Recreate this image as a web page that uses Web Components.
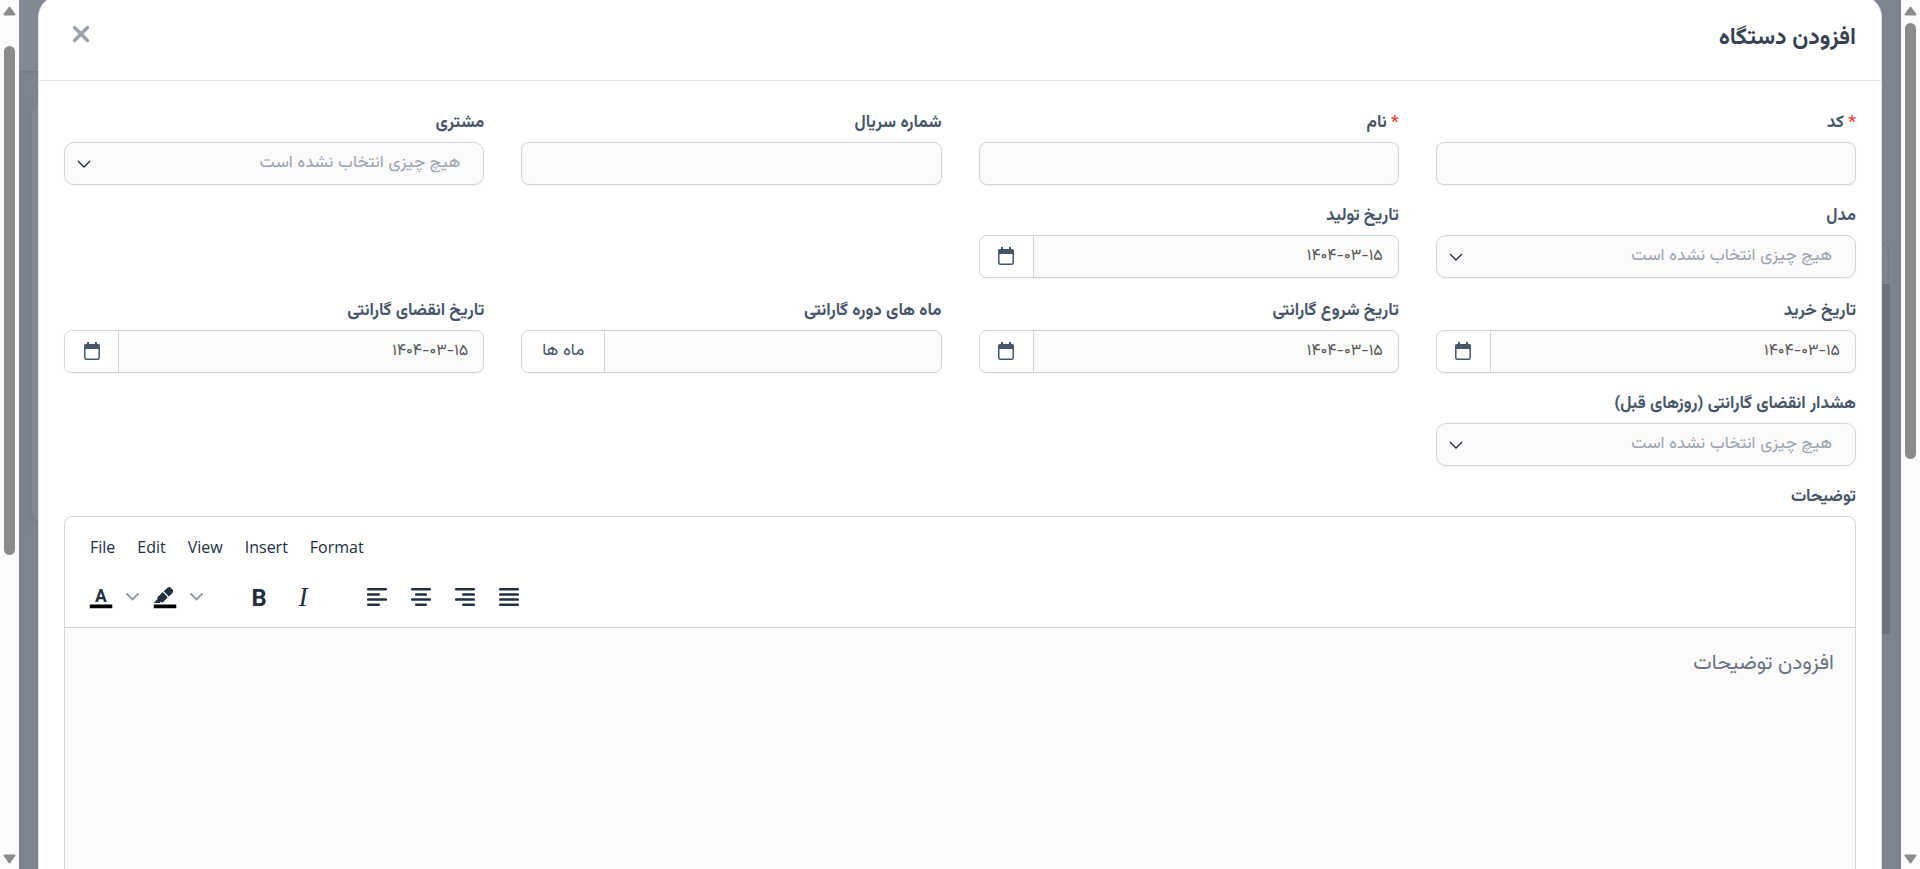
<!DOCTYPE html>
<html lang="fa" dir="rtl">
<head>
<meta charset="utf-8">
<title>افزودن دستگاه</title>
<style>
  html, body {
    margin: 0;
    height: 100%;
    overflow: hidden;
  }
  body {
    font-family: "IRANYekan", "Vazirmatn", "Noto Sans Arabic", "DejaVu Sans", sans-serif;
    font-size: 16px;
    color: #475569;
    background: #7d848e;
  }
</style>
</head>
<body>

<app-shell>
  <device-modal heading="افزودن دستگاه">
    <form-section>
      <form-field label="کد" required></form-field>
      <form-field label="نام" required></form-field>
      <form-field label="شماره سریال"></form-field>
      <form-field label="مشتری" type="select"></form-field>
      <form-field label="مدل" type="select"></form-field>
      <form-field label="تاریخ تولید" type="date" value="۱۴۰۴-۰۳-۱۵"></form-field>
    </form-section>
    <form-section>
      <form-field label="تاریخ خرید" type="date" value="۱۴۰۴-۰۳-۱۵"></form-field>
      <form-field label="تاریخ شروع گارانتی" type="date" value="۱۴۰۴-۰۳-۱۵"></form-field>
      <form-field label="ماه های دوره گارانتی" type="unit" unit="ماه ها"></form-field>
      <form-field label="تاریخ انقضای گارانتی" type="date" value="۱۴۰۴-۰۳-۱۵"></form-field>
      <form-field label="هشدار انقضای گارانتی (روزهای قبل)" type="select"></form-field>
    </form-section>
    <text-editor label="توضیحات" placeholder="افزودن توضیحات"></text-editor>
  </device-modal>
</app-shell>

<script>
class ScrollTrack extends HTMLElement {
  constructor() {
    super();
    this.attachShadow({ mode: 'open' });
    this.shadowRoot.innerHTML = `
      <style>
        :host {
          display: flex;
          flex-direction: column;
          align-items: center;
          width: 19px;
          flex: none;
          padding: 6px 0 5px;
          box-sizing: border-box;
          background: #fcfcfc;
        }
        svg { display: block; flex: none; }
        .track { flex: 1; display: flex; flex-direction: column; }
        .before { flex: var(--before); }
        .thumb { flex: var(--thumb); width: 11px; border-radius: 6px; background: #8b8b8b; }
        .after { flex: var(--after); }
      </style>
      <svg width="13" height="10"><path d="M6.500 1.500L11.500 8.500H1.500Z" fill="#8b8b8b" stroke="#8b8b8b" stroke-width="2" stroke-linejoin="round"/></svg>
      <div class="track"><div class="before"></div><div class="thumb"></div><div class="after"></div></div>
      <svg width="13" height="10"><path d="M6.500 8.500L11.500 1.500H1.500Z" fill="#8b8b8b" stroke="#8b8b8b" stroke-width="2" stroke-linejoin="round"/></svg>
    `;
  }
}
customElements.define('scroll-track', ScrollTrack);

class AppShell extends HTMLElement {
  constructor() {
    super();
    this.attachShadow({ mode: 'open' });
    this.shadowRoot.innerHTML = `
      <style>
        :host { display: flex; height: 100vh; direction: ltr; }
        .page-bar { --before: 30; --thumb: 508; --after: 299; }
        .modal-bar { --before: 7; --thumb: 435; --after: 395; }
        .backdrop {
          flex: 1;
          min-width: 0;
          position: relative;
          overflow: hidden;
          padding: 0 19px;
          background: #7d848e;
        }
        /* what shows of the dimmed page round the modal */
        .topbar { position: absolute; inset: 0 auto auto 0; width: 60px; height: 71px; background: #828992; box-shadow: 0 1px 2px #6f7680; }
        .card { position: absolute; left: 13px; top: 105px; width: 60px; height: 416px; border-radius: 8px; background: #828992; box-shadow: 0 2px 6px #717882; }
        .pill { position: absolute; right: 12px; top: 243px; width: 60px; height: 40px; border-radius: 8px; border: 1px solid #737a84; box-sizing: border-box; }
        .strip { position: absolute; right: 11px; top: 284px; width: 60px; height: 350px; background: #6b727b; }
        ::slotted(*) { position: relative; }
      </style>
      <scroll-track class="page-bar"></scroll-track>
      <div class="backdrop">
        <div class="topbar"></div>
        <div class="card"></div>
        <div class="pill"></div>
        <div class="strip"></div>
        <slot></slot>
      </div>
      <scroll-track class="modal-bar"></scroll-track>
    `;
  }
}
customElements.define('app-shell', AppShell);

class DeviceModal extends HTMLElement {
  constructor() {
    super();
    this.attachShadow({ mode: 'open' });
    this.shadowRoot.innerHTML = `
      <style>
        :host {
          display: flex;
          flex-direction: column;
          direction: rtl;
          box-sizing: border-box;
          min-height: 100%;
          margin-top: -5px;
          background: #fff;
          border: 1px solid #dcdfe5;
          border-radius: 22px;
        }
        header {
          display: flex;
          justify-content: space-between;
          align-items: center;
          padding: 0 25px 0 29px;
          height: 85px;
          border-bottom: 1px solid #e2e4e8;
          box-sizing: border-box;
        }
        h1 { margin: 0; font-size: 23px; line-height: 32px; font-weight: bold; color: #374151; }
        button { border: 0; background: none; padding: 4px; margin-bottom: 8px; color: #9ca3af; }
        svg { display: block; }
        .body { padding: 29px 25px 0; display: flex; flex-direction: column; gap: 20px; }
        ::slotted(text-editor) { margin-top: -2px; }
      </style>
      <header>
        <h1>${this.getAttribute('heading')}</h1>
        <button type="button" aria-label="بستن">
          <svg width="18" height="18" viewBox="0 0 18 18"><path d="M2.500 2.500l13 13M15.500 2.500l-13 13" stroke="currentColor" stroke-width="3.500" stroke-linecap="round"/></svg>
        </button>
      </header>
      <div class="body"><slot></slot></div>
    `;
  }
}
customElements.define('device-modal', DeviceModal);

class FormSection extends HTMLElement {
  constructor() {
    super();
    this.attachShadow({ mode: 'open' });
    this.shadowRoot.innerHTML = `
      <style>
        :host { display: grid; grid-template-columns: repeat(4, minmax(0, 1fr)); gap: 18px 37px; }
      </style>
      <slot></slot>
    `;
  }
}
customElements.define('form-section', FormSection);

const calendarIcon = `
  <svg width="16" height="18" viewBox="0 0 16 18" fill="none">
    <rect x=".8" y="3" width="14.400" height="14.200" rx="1.500" stroke="#475569" stroke-width="1.500"/>
    <path d="M0 7V4a2 2 0 0 1 2-2h12a2 2 0 0 1 2 2v3zM3 0h2v3H3zM11 0h2v3h-2z" fill="#475569"/>
  </svg>`;

class FormField extends HTMLElement {
  constructor() {
    super();
    this.attachShadow({ mode: 'open' });
    const type = this.getAttribute('type') || 'text';
    const value = this.getAttribute('value') || '';

    let control = `<input id="control" type="text" value="${value}">`;
    if (type === 'select') {
      control = `
        <select id="control"><option>هیچ چیزی انتخاب نشده است</option></select>
        <svg class="chevron" width="14" height="8" viewBox="0 0 14 8"><path d="M1 1l6 6 6-6" fill="none" stroke="#1f2937" stroke-width="1.300"/></svg>`;
    }
    if (type === 'date') {
      control += `<button class="addon" type="button" aria-label="تقویم">${calendarIcon}</button>`;
    }
    if (type === 'unit') {
      control += `<span class="addon wide">${this.getAttribute('unit')}</span>`;
    }

    this.shadowRoot.innerHTML = `
      <style>
        :host { display: block; direction: rtl; }
        label { display: block; margin-bottom: 6px; font-size: 17px; line-height: 26px; font-weight: bold; color: #475569; }
        .star { color: #ef4444; }
        .control {
          display: flex;
          align-items: center;
          position: relative;
          height: 43px;
          box-sizing: border-box;
          border: 1px solid #d1d5db;
          border-radius: 8px;
          background: #fbfbfb;
          box-shadow: 0 1px 2px rgba(0, 0, 0, .06);
          overflow: hidden;
        }
        .control.select { border-radius: 10px; }
        input, select {
          flex: 1;
          min-width: 0;
          height: 100%;
          box-sizing: border-box;
          border: 0;
          outline: 0;
          margin: 0;
          padding: 0 15px;
          background: transparent;
          font-family: inherit;
          font-size: 16px;
          color: #555;
        }
        select { appearance: none; padding: 0 23px 2px; font-size: 17px; color: #9ca3af; }
        .chevron { position: absolute; left: 12px; top: 17px; pointer-events: none; }
        .addon {
          display: flex;
          align-items: center;
          justify-content: center;
          flex: none;
          height: 100%;
          width: 54px;
          box-sizing: border-box;
          border: 0;
          border-right: 1px solid #d1d5db;
          padding: 0 0 2px;
          background: #fff;
          color: #475569;
        }
        .wide { width: 83px; font-size: 17px; }
      </style>
      <label for="control">${this.hasAttribute('required') ? '<span class="star">*</span> ' : ''}${this.getAttribute('label')}</label>
      <div class="control ${type}">${control}</div>
    `;
  }
}
customElements.define('form-field', FormField);

// [x, width] for each of the four lines
const alignIcon = bars => `
  <svg width="20" height="18" viewBox="0 0 20 18" fill="currentColor">
    ${bars.map(([x, w], i) => `<rect x="${x}" y="${i * 5.17}" width="${w}" height="2.500" rx="1.200"/>`).join('')}
  </svg>`;

const smallChevron = `<svg width="13" height="8" viewBox="0 0 13 8"><path d="M1 1l5.500 5.500L12 1" fill="none" stroke="#222f3e" stroke-opacity=".5" stroke-width="1.800" stroke-linecap="round"/></svg>`;

class TextEditor extends HTMLElement {
  constructor() {
    super();
    this.attachShadow({ mode: 'open' });
    const menus = ['File', 'Edit', 'View', 'Insert', 'Format'];

    this.shadowRoot.innerHTML = `
      <style>
        :host { display: block; }
        label { display: block; margin-bottom: 6px; font-size: 17px; line-height: 26px; font-weight: bold; color: #475569; }
        .editor { direction: ltr; border: 1px solid #d1d5db; border-radius: 8px; overflow: hidden; }
        .menubar, .toolbar, .group { display: flex; gap: 1px; }
        .menubar { padding: 12px 15px 0; gap: 2px; }
        .toolbar { padding: 14px 14px 12px; gap: 31px; border-bottom: 1px solid #d1d5db; }
        button { border: 0; background: none; padding: 0; height: 36px; color: #222f3e; }
        .menubar button { padding: 0 10px; font: 16px "Open Sans", "Noto Sans", sans-serif; }
        .group button { display: flex; align-items: center; justify-content: center; width: 43px; }
        .group button.more { width: 20px; margin-left: -1px; }
        svg { overflow: visible; }
        textarea {
          display: block;
          width: 100%;
          height: 400px;
          box-sizing: border-box;
          border: 0;
          outline: 0;
          resize: none;
          padding: 21px;
          direction: rtl;
          background: #fbfbfb;
          font-family: inherit;
          font-size: 21px;
          line-height: 30px;
        }
        textarea::placeholder { color: #6b7280; opacity: 1; }
      </style>
      <label for="text">${this.getAttribute('label')}</label>
      <div class="editor">
        <div class="menubar">${menus.map(m => `<button type="button">${m}</button>`).join('')}</div>
        <div class="toolbar">
          <div class="group">
            <button type="button" aria-label="Text color">
              <svg width="30" height="30" viewBox="0 0 24 24"><text x="12" y="16" text-anchor="middle" font-family="Roboto, sans-serif" font-weight="bold" font-size="14" fill="#222f3e">A</text><path d="M3 18h18v3H3z" fill="#000"/></svg>
            </button>
            <button type="button" class="more" aria-label="Text color menu">${smallChevron}</button>
            <button type="button" aria-label="Background color">
              <svg width="30" height="30" viewBox="0 0 24 24" fill="#222f3e"><path d="M7.700 16.700H3l3.300-3.300-.7-.8L10.200 8l4 4.100-4 4.200c-.2.2-.6.2-.8 0l-.6-.7-1.100 1.100zm5-7.500L11 7.400l3-2.900a2 2 0 0 1 2.600 0L18 6c.7.7.7 2 0 2.700l-2.900 2.900-1.800-1.800-.5-.6"/><path d="M3 18h18v3H3z" fill="#000"/></svg>
            </button>
            <button type="button" class="more" aria-label="Background color menu">${smallChevron}</button>
          </div>
          <div class="group">
            <button type="button" aria-label="Bold"><svg width="30" height="30" viewBox="0 0 24 24"><text x="12" y="19" text-anchor="middle" font-family="Roboto, sans-serif" font-weight="bold" font-size="19" fill="#222f3e">B</text></svg></button>
            <button type="button" aria-label="Italic"><svg width="30" height="30" viewBox="0 0 24 24"><text x="12" y="19" text-anchor="middle" font-family="Liberation Serif, serif" font-style="italic" font-size="21" fill="#222f3e">I</text></svg></button>
          </div>
          <div class="group">
            <button type="button" aria-label="Align left">${alignIcon([[0, 20], [0, 13], [0, 20], [0, 13]])}</button>
            <button type="button" aria-label="Align center">${alignIcon([[0, 20], [4, 12], [0, 20], [4, 12]])}</button>
            <button type="button" aria-label="Align right">${alignIcon([[0, 20], [7, 13], [0, 20], [7, 13]])}</button>
            <button type="button" aria-label="Justify">${alignIcon([[0, 20], [0, 20], [0, 20], [0, 20]])}</button>
          </div>
        </div>
        <textarea id="text" placeholder="${this.getAttribute('placeholder')}"></textarea>
      </div>
    `;
  }
}
customElements.define('text-editor', TextEditor);
</script>
</body>
</html>
